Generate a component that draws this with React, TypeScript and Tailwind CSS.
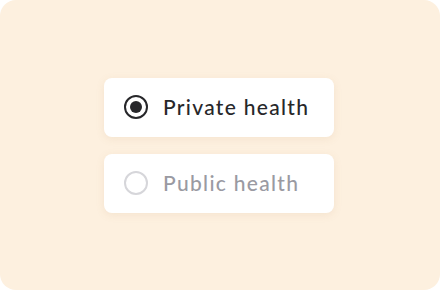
export default function App() {
  return (
    <div className="w-[440px] h-[290px] bg-white">
      <div
        className="w-full h-full rounded-[16px] bg-[#fdf0df] flex flex-col items-center justify-center gap-[17px] pr-[2px]"
        style={{ fontFamily: 'Lato, "Noto Sans", sans-serif' }}
      >
        <div className="w-[230px] h-[59px] bg-white rounded-[8px] shadow-[0_2px_8px_rgba(180,140,90,0.12)] flex items-center pl-[20px] gap-[15px]">
          <span className="w-[24px] h-[24px] rounded-full border-[2.5px] border-[#27272a] flex items-center justify-center">
            <span className="w-[12px] h-[12px] rounded-full bg-[#27272a]" />
          </span>
          <span className="text-[21px] font-medium text-[#27272a] tracking-[1.3px]">Private health</span>
        </div>
        <div className="w-[230px] h-[59px] bg-white rounded-[8px] shadow-[0_2px_8px_rgba(180,140,90,0.12)] flex items-center pl-[20px] gap-[15px]">
          <span className="w-[24px] h-[24px] rounded-full border-[2px] border-[#d6d6da]" />
          <span className="text-[21px] font-medium text-[#9a9aa2] tracking-[1.3px]">Public health</span>
        </div>
      </div>
    </div>
  )
}
